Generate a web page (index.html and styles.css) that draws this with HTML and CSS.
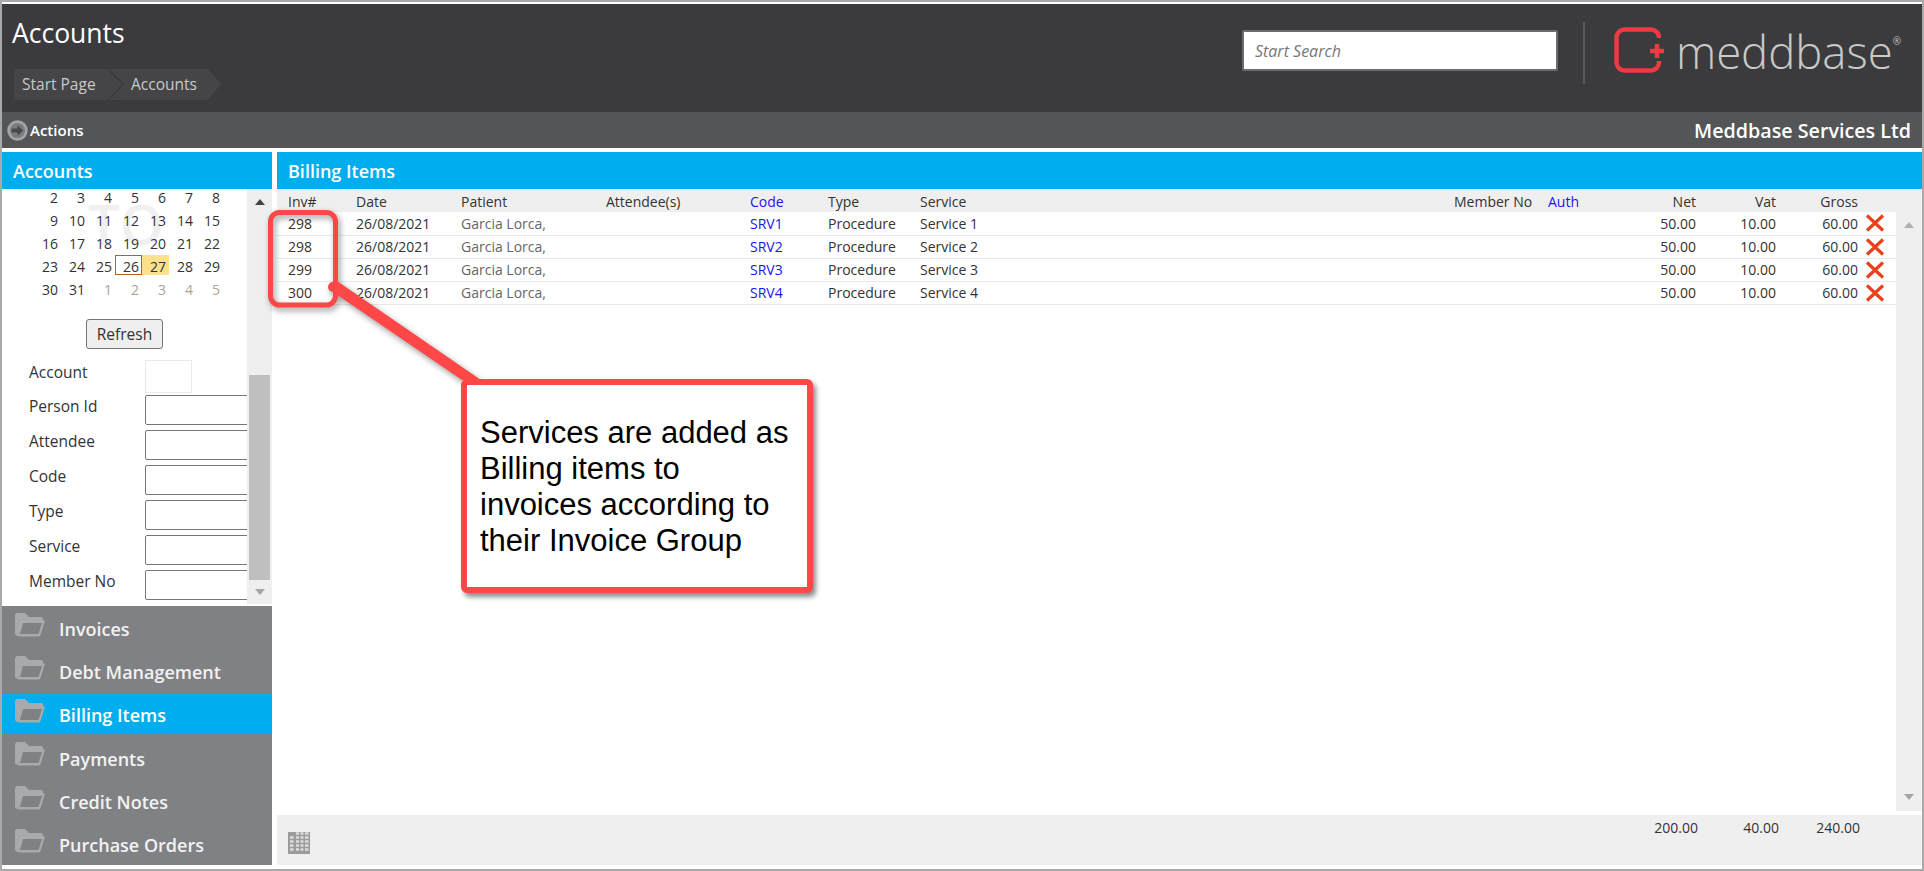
FILE: index.html
```html
<!DOCTYPE html>
<html lang="en">
<head>
<meta charset="utf-8">
<title>Accounts</title>
<link rel="stylesheet" href="styles.css">
</head>
<body>
<div class="page">
  <header class="topbar">
    <div class="topbar-left">
      <h1 class="page-title">Accounts</h1>
      <nav class="crumbs">
        <span class="crumb crumb-first">Start Page</span>
        <span class="crumb crumb-next">Accounts</span>
      </nav>
    </div>
    <div class="brand">
      <input class="search" type="text" placeholder="Start Search">
      <span class="brand-divider"></span>
      <svg class="logo-mark" viewBox="0 0 50 46" width="50" height="46">
        <path class="logo-stroke" d="M45 11V10.5a8 8 0 0 0-8-8H10.500a8 8 0 0 0-8 8V35.500a8 8 0 0 0 8 8H37a8 8 0 0 0 8-8V34"/>
        <path class="logo-stroke" d="M36 24H50M43 17V31"/>
      </svg>
      <span class="logo-text">meddbase<sup class="logo-reg">®</sup></span>
    </div>
  </header>

  <div class="actionbar">
    <div class="actions">
      <svg class="actions-icon" viewBox="0 0 20 20" width="21" height="21">
        <circle cx="10" cy="10" r="8.500" fill="#7c7d7f" stroke="#a4a5a6" stroke-width="2.500"/>
        <path d="M4.500 8H10V5L15.500 10 10 15V12H4.500Z" fill="#48494b"/>
      </svg>
      <span>Actions</span>
    </div>
    <div class="company">Meddbase Services Ltd</div>
  </div>

  <main class="workspace">
    <aside class="sidebar">
      <div class="panel-title">Accounts</div>
      <div class="filter-area">
        <div class="filter-content">
          <span class="watermark">TO</span>
          <div class="calendar">
            <span>2</span><span>3</span><span>4</span><span>5</span><span>6</span><span>7</span><span>8</span>
            <span>9</span><span>10</span><span>11</span><span>12</span><span>13</span><span>14</span><span>15</span>
            <span>16</span><span>17</span><span>18</span><span>19</span><span>20</span><span>21</span><span>22</span>
            <span>23</span><span>24</span><span>25</span><span class="cal-from">26</span><span class="cal-today">27</span><span>28</span><span>29</span>
            <span>30</span><span>31</span><span class="cal-muted">1</span><span class="cal-muted">2</span><span class="cal-muted">3</span><span class="cal-muted">4</span><span class="cal-muted">5</span>
          </div>
          <button class="refresh" type="button">Refresh</button>
          <div class="field field-account"><label>Account</label><span class="account-box"></span></div>
          <div class="field"><label>Person Id</label><input class="field-input" type="text"></div>
          <div class="field"><label>Attendee</label><input class="field-input" type="text"></div>
          <div class="field"><label>Code</label><input class="field-input" type="text"></div>
          <div class="field"><label>Type</label><input class="field-input" type="text"></div>
          <div class="field"><label>Service</label><input class="field-input" type="text"></div>
          <div class="field"><label>Member No</label><input class="field-input" type="text"></div>
        </div>
        <div class="side-scroll">
          <span class="arrow-up arrow-dark"></span>
          <span class="side-thumb"></span>
          <span class="arrow-down"></span>
        </div>
      </div>
      <nav class="nav">
        <a class="nav-item"><svg class="folder" viewBox="0 0 31 24" width="31" height="24"><use href="#folder"/></svg>Invoices</a>
        <a class="nav-item"><svg class="folder" viewBox="0 0 31 24" width="31" height="24"><use href="#folder"/></svg>Debt Management</a>
        <a class="nav-item nav-active"><svg class="folder" viewBox="0 0 31 24" width="31" height="24"><use href="#folder"/></svg>Billing Items</a>
        <a class="nav-item"><svg class="folder" viewBox="0 0 31 24" width="31" height="24"><use href="#folder"/></svg>Payments</a>
        <a class="nav-item"><svg class="folder" viewBox="0 0 31 24" width="31" height="24"><use href="#folder"/></svg>Credit Notes</a>
        <a class="nav-item"><svg class="folder" viewBox="0 0 31 24" width="31" height="24"><use href="#folder"/></svg>Purchase Orders</a>
      </nav>
    </aside>

    <section class="content">
      <div class="panel-title panel-title-main">Billing Items</div>
      <div class="grid-area">
        <table class="items">
          <colgroup>
            <col class="c-inv"><col class="c-date"><col class="c-patient"><col class="c-attendee"><col class="c-code"><col class="c-type"><col class="c-service"><col class="c-member"><col class="c-auth"><col class="c-net"><col class="c-vat"><col class="c-gross"><col class="c-del">
          </colgroup>
          <thead>
            <tr>
              <th>Inv#</th><th>Date</th><th>Patient</th><th>Attendee(s)</th><th class="link">Code</th><th>Type</th><th>Service</th><th>Member No</th><th class="link">Auth</th><th class="num">Net</th><th class="num">Vat</th><th class="num">Gross</th><th></th>
            </tr>
          </thead>
          <tbody>
            <tr><td>298</td><td>26/08/2021</td><td class="patient">Garcia Lorca,</td><td></td><td class="link">SRV1</td><td>Procedure</td><td>Service 1</td><td></td><td></td><td class="num">50.00</td><td class="num">10.00</td><td class="num">60.00</td><td class="del"><svg class="del-icon" viewBox="0 0 20 18" width="20" height="18"><use href="#cross"/></svg></td></tr>
            <tr><td>298</td><td>26/08/2021</td><td class="patient">Garcia Lorca,</td><td></td><td class="link">SRV2</td><td>Procedure</td><td>Service 2</td><td></td><td></td><td class="num">50.00</td><td class="num">10.00</td><td class="num">60.00</td><td class="del"><svg class="del-icon" viewBox="0 0 20 18" width="20" height="18"><use href="#cross"/></svg></td></tr>
            <tr><td>299</td><td>26/08/2021</td><td class="patient">Garcia Lorca,</td><td></td><td class="link">SRV3</td><td>Procedure</td><td>Service 3</td><td></td><td></td><td class="num">50.00</td><td class="num">10.00</td><td class="num">60.00</td><td class="del"><svg class="del-icon" viewBox="0 0 20 18" width="20" height="18"><use href="#cross"/></svg></td></tr>
            <tr><td>300</td><td>26/08/2021</td><td class="patient">Garcia Lorca,</td><td></td><td class="link">SRV4</td><td>Procedure</td><td>Service 4</td><td></td><td></td><td class="num">50.00</td><td class="num">10.00</td><td class="num">60.00</td><td class="del"><svg class="del-icon" viewBox="0 0 20 18" width="20" height="18"><use href="#cross"/></svg></td></tr>
          </tbody>
        </table>
        <div class="main-scroll">
          <span class="arrow-up"></span>
          <span class="arrow-down"></span>
        </div>
      </div>
      <footer class="totals-bar">
        <svg class="grid-icon" viewBox="0 0 22 22" width="22" height="22">
          <rect width="22" height="22" fill="#9c9c9c"/>
          <path d="M8 1.500H11M12.500 1.500H15.500M17 1.500H20.500M2 5.500H5.500M8 5.500H11M12.500 5.500H15.500M17 5.500H20.500M2 9.500H5.500M8 9.500H11M12.500 9.500H15.500M17 9.500H20.500M2 13.500H5.500M8 13.500H11M12.500 13.500H15.500M17 13.500H20.500M2 17.500H5.500M8 17.500H11M12.500 17.500H15.500M17 17.500H20.500" stroke="#dcdcdc" stroke-width="2.500" fill="none"/>
        </svg>
        <div class="totals"><span>200.00</span><span>40.00</span><span>240.00</span></div>
      </footer>
    </section>
  </main>
</div>

<svg class="annotation-lines" viewBox="0 0 1924 871" width="1924" height="871">
  <rect class="anno-stroke" x="270.500" y="212.500" width="65" height="92.500" rx="9"/>
  <circle class="anno-fill" cx="333" cy="287" r="5"/>
  <polygon class="anno-fill" points="337,281 481,380 462,380 333,292"/>
</svg>
<div class="callout">Services are added as<br>Billing items to<br>invoices according to<br>their Invoice Group</div>

<svg class="defs" width="0" height="0">
  <defs>
    <g id="folder">
      <path d="M0 3Q0 0 3 0H10L14 4H26Q28 4 28 6V9H7.500L3 22 3.500 23H3Q0 23 0 20Z" fill="#a9aaac"/>
      <path d="M6 7.500H30L25.500 22Q25 23.500 23.500 23.500H3Z" fill="#a9aaac"/>
      <path class="folder-inner" d="M8 10H27L23.500 21H5Z"/>
    </g>
    <g id="cross">
      <path d="M2 1.500L18 16.500M18 1.500L2 16.500" stroke="#e8411e" stroke-width="3.200" fill="none"/>
    </g>
  </defs>
</svg>
</body>
</html>
```
FILE: styles.css
```css
* { box-sizing: border-box; }
html, body { margin: 0; padding: 0; background: #fff; }
body {
  width: 1924px;
  height: 871px;
  overflow: hidden;
  position: relative;
  font-family: "Open Sans", "Liberation Sans", sans-serif;
  font-size: 14px;
  color: #333;
}
.page {
  width: 1924px;
  height: 871px;
  border: 2px solid #a9a9a9;
  padding-top: 2px;
  background: #fff;
  display: flex;
  flex-direction: column;
}

/* top bar */
.topbar {
  height: 108px;
  flex: none;
  background: #3b3b3d;
  display: flex;
}
.topbar-left { padding-left: 10px; }
.page-title {
  margin: 11px 0 0;
  font-size: 26.500px;
  line-height: 36px;
  font-weight: 400;
  color: #fff;
}
.crumbs { display: flex; margin: 18px 0 0 2px; }
.crumb {
  height: 31px;
  line-height: 30px;
  font-size: 15.500px;
  color: #c9c9c9;
  background: #454547;
}
.crumb-first {
  width: 108px;
  padding-left: 8px;
  clip-path: polygon(0 0, 93px 0, 100% 50%, 93px 100%, 0 100%);
}
.crumb-next {
  width: 112px;
  margin-left: -13px;
  padding-left: 22px;
  clip-path: polygon(0 0, 99px 0, 100% 50%, 99px 100%, 0 100%, 15px 50%);
}
.brand {
  margin-left: auto;
  padding-right: 21px;
  display: flex;
  align-items: flex-start;
}
.search {
  width: 316px;
  height: 41px;
  margin-top: 26px;
  padding: 0 0 0 11px;
  border: 2px solid #6c6c6e;
  border-radius: 2px;
  background: #fff;
  font-family: "Open Sans", sans-serif;
  font-size: 16px;
  font-style: italic;
  outline: none;
}
.search::placeholder { color: #777; opacity: 1; }
.brand-divider {
  width: 2px;
  height: 62px;
  margin: 18px 0 0 25px;
  background: #5a5a5c;
}
.logo-mark { margin: 23px 0 0 29px; }
.logo-stroke { fill: none; stroke: #ee3a43; stroke-width: 4.500; }
.logo-text {
  margin: 17px 0 0 12px;
  font-size: 45.500px;
  line-height: 60px;
  font-weight: 300;
  color: #c9c9c9;
}
.logo-reg {
  font-size: 10px;
  line-height: 0;
  vertical-align: 24px;
  font-weight: 400;
}

/* actions bar */
.actionbar {
  height: 36px;
  flex: none;
  background: #545557;
  color: #fff;
  display: flex;
  align-items: center;
  justify-content: space-between;
  padding: 0 11px 0 5px;
}
.actions { display: flex; align-items: center; gap: 2px; font-size: 15px; font-weight: 600; }
.company { font-size: 19.700px; font-weight: 600; }

/* layout */
.workspace {
  flex: none;
  height: 713px;
  margin-top: 4px;
  display: flex;
  gap: 5px;
}
.sidebar { width: 270px; flex: none; display: flex; flex-direction: column; }
.content { flex: 1; min-width: 0; display: flex; flex-direction: column; }
.panel-title {
  height: 37px;
  flex: none;
  background: #00aeef;
  color: #fff;
  font-size: 18px;
  font-weight: 600;
  line-height: 39px;
  padding-left: 11px;
}

/* filter panel */
.filter-area {
  height: 415px;
  flex: none;
  display: flex;
  overflow: hidden;
}
.filter-content {
  width: 245px;
  flex: none;
  position: relative;
  overflow: hidden;
  color: #333;
}
.watermark {
  position: absolute;
  left: 86px;
  top: -4px;
  font-size: 56px;
  line-height: 76px;
  font-weight: 600;
  color: #f0f0f0;
}
.calendar {
  position: relative;
  margin: -3px 0 0 32px;
  display: grid;
  grid-template-columns: repeat(7, 27px);
  grid-auto-rows: 20px;
  row-gap: 3px;
  text-align: right;
  font-size: 14px;
  line-height: 24px;
}
.calendar span { padding-right: 3px; height: 20px; }
.calendar .cal-from { border: 1px solid #b5601c; padding-right: 2px; line-height: 22px; }
.calendar .cal-today { background: #fbe18c; }
.calendar .cal-muted { color: #aaa594; }
.refresh {
  display: block;
  position: relative;
  width: 77px;
  height: 30px;
  margin: 21px 0 0 84px;
  padding: 0;
  background: #efefef;
  border: 1px solid #767676;
  border-radius: 3px;
  font-family: "Open Sans", sans-serif;
  font-size: 15.500px;
  color: #333;
}
.field {
  display: flex;
  height: 30px;
  margin-bottom: 5px;
  padding-left: 27px;
  white-space: nowrap;
  font-size: 15.500px;
}
.field label { width: 116px; flex: none; line-height: 22px; }
.field-account { height: 33px; margin: 11px 0 2px; }
.field-account label { line-height: 24px; }
.account-box { width: 47px; height: 33px; border: 1px solid #e4ecef; }
.field-input {
  width: 130px;
  height: 30px;
  flex: none;
  padding: 0;
  background: #fff;
  border: 1px solid #767676;
  border-radius: 2px;
}
.side-scroll {
  width: 25px;
  flex: none;
  background: #efefef;
  display: flex;
  flex-direction: column;
  align-items: center;
}
.side-scroll .arrow-up { margin-top: 10px; }
.side-thumb { width: 21px; height: 205px; margin-top: 170px; background: #bfbfbf; }
.side-scroll .arrow-down { margin-top: 9px; }
.arrow-up, .arrow-down {
  width: 0;
  height: 0;
  border-left: 5.500px solid transparent;
  border-right: 5.500px solid transparent;
}
.arrow-up { border-bottom: 6px solid #b0b0b0; }
.arrow-up.arrow-dark { border-bottom-color: #444; }
.arrow-down { border-top: 6px solid #a6a6a6; }

/* accordion */
.nav {
  margin-top: 2px;
  flex: 1;
  background: #808184;
  display: flex;
  flex-direction: column;
}
.nav-item {
  flex: none;
  height: 43.170px;
  display: flex;
  align-items: center;
  padding: 3px 0 0 13px;
  gap: 13px;
  font-size: 18px;
  font-weight: 600;
  color: #f2f2f2;
}
.folder { align-self: flex-start; margin-top: 4px; flex: none; }
.folder-inner { fill: #808184; }
.nav-active {
  background: #00aeef;
  border-top: 1px solid #808184;
  border-bottom: 2px solid #808184;
  color: #fff;
}
.nav-active .folder { margin-top: 3px; }
.nav-active .folder-inner { fill: #00aeef; }

/* grid */
.grid-area {
  height: 622px;
  flex: none;
  display: flex;
}
.items {
  width: 1619px;
  flex: none;
  align-self: flex-start;
  table-layout: fixed;
  border-collapse: collapse;
  font-size: 14px;
}
.c-inv { width: 79px; } .c-date { width: 105px; } .c-patient { width: 145px; }
.c-attendee { width: 144px; } .c-code { width: 78px; } .c-type { width: 92px; }
.c-service { width: 534px; } .c-member { width: 94px; } .c-auth { width: 92px; }
.c-net { width: 56px; } .c-vat { width: 80px; } .c-gross { width: 82px; } .c-del { width: 38px; }
.items th {
  height: 23px;
  padding: 2px 0 0;
  background: #efefef;
  font-weight: 400;
  text-align: left;
  white-space: nowrap;
  line-height: 20px;
}
.items td {
  height: 23px;
  padding: 1px 0 0;
  border-bottom: 1px solid #e9e9e9;
  line-height: 20px;
  white-space: nowrap;
}
.items th:first-child, .items td:first-child { padding-left: 11px; }
.items .num { text-align: right; }
.items .link { color: #1a14f0; }
.items .patient { color: #666; }
.items .del { padding: 0 0 0 7px; }
.del-icon { display: block; }
.main-scroll {
  flex: 1;
  background: #efefef;
  display: flex;
  flex-direction: column;
  align-items: center;
  justify-content: space-between;
  padding: 33px 0 11px;
}
.totals-bar {
  height: 50px;
  margin-top: 4px;
  flex: none;
  background: #efefef;
  display: flex;
  padding-left: 11px;
}
.grid-icon { margin-top: 17px; }
.totals {
  margin-left: auto;
  padding: 3px 62px 0 0;
  display: grid;
  grid-template-columns: 81px 81px 81px;
  text-align: right;
  line-height: 20px;
}

/* annotation */
.annotation-lines {
  position: absolute;
  left: 0;
  top: 0;
  pointer-events: none;
  filter: drop-shadow(2px 3px 3px rgba(0, 0, 0, 0.4));
}
.anno-stroke { fill: none; stroke: #ff4747; stroke-width: 5; }
.anno-fill { fill: #ff4747; }
.callout {
  position: absolute;
  left: 461px;
  top: 379px;
  width: 352px;
  height: 214px;
  display: flex;
  flex-direction: column;
  justify-content: center;
  padding: 1px 0 0 13px;
  background: #fff;
  border: 6px solid #ff4747;
  border-radius: 6px;
  box-shadow: 3px 4px 5px rgba(0, 0, 0, 0.45);
  font-family: "Liberation Sans", Arial, sans-serif;
  font-size: 31px;
  line-height: 36px;
  color: #000;
  white-space: nowrap;
}
.defs { position: absolute; }
```
